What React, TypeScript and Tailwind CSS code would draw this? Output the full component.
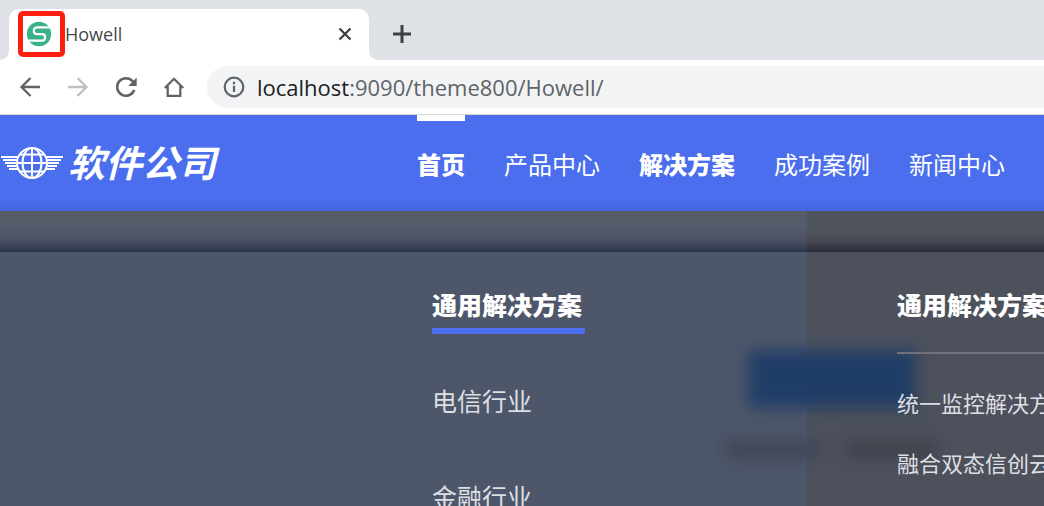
import React from 'react';
import clsx from 'clsx';

const navItems = [
  { label: '首页', current: true, bold: true },
  { label: '产品中心' },
  { label: '解决方案', bold: true },
  { label: '成功案例' },
  { label: '新闻中心' },
];

const industries = ['电信行业', '金融行业'];
const solutions = ['统一监控解决方案', '融合双态信创云解决方案'];

const Favicon = () => (
  <svg viewBox="0 0 26 26" className="h-[26px] w-[26px]" aria-hidden="true">
    <circle cx="13" cy="13" r="12.200" fill="#3cb28a" />
    <path
      d="M26 6.300H11.800C6.400 6.300 6.400 13.200 11.800 13.200H16C20.200 13.200 20.200 19.700 16 19.700H0"
      fill="none"
      stroke="white"
      strokeWidth="2.200"
    />
  </svg>
);

const BrowserTabs = () => (
  <div className="flex h-[60px] items-end bg-[#dee1e6]">
    <div className="h-[51px] w-[9px] bg-white">
      <div className="h-full rounded-br-[9px] bg-[#dee1e6]" />
    </div>
    <div className="flex h-[51px] w-[360px] items-center rounded-t-[10px] bg-white pr-[17px] pb-px pl-[9px]">
      <div className="flex h-[46px] w-[47px] shrink-0 items-center justify-center rounded-[5px] border-[5px] border-[#ff1f11] pr-[5px] pb-px">
        <Favicon />
      </div>
      <span className="flex-1 text-[18px] leading-6 text-[#45484c]">Howell</span>
      <button aria-label="Close tab" className="text-[#3c4043]">
        <svg viewBox="0 0 14 14" className="h-[14px] w-[14px]" fill="none" stroke="currentColor" strokeWidth="2.300">
          <path d="M1.500 1.500L12.500 12.500M12.500 1.500L1.500 12.500" />
        </svg>
      </button>
    </div>
    <div className="h-[51px] flex-1 bg-white">
      <div className="flex h-full items-center rounded-bl-[9px] bg-[#dee1e6] pb-px pl-[24px]">
        <button aria-label="New tab" className="text-[#3c4043]">
          <svg viewBox="0 0 18 18" className="h-[18px] w-[18px]" fill="none" stroke="currentColor" strokeWidth="3">
            <path d="M9 0V18M0 9H18" />
          </svg>
        </button>
      </div>
    </div>
  </div>
);

const BrowserToolbar = () => (
  <div className="flex h-[55px] items-center border-b border-[#d5d7da] bg-white pl-[18px] text-[#5f6368]">
    <div className="flex gap-6">
      <button aria-label="Back">
        <svg viewBox="0 0 24 24" className="h-6 w-6" fill="none" stroke="currentColor" strokeWidth="2.300">
          <path d="M22 12H4M12.500 3L3.500 12L12.500 21" />
        </svg>
      </button>
      <button aria-label="Forward" className="text-[#bdc0c3]">
        <svg viewBox="0 0 24 24" className="h-6 w-6" fill="none" stroke="currentColor" strokeWidth="2.300">
          <path d="M2 12H20M11.500 3L20.500 12L11.500 21" />
        </svg>
      </button>
      <button aria-label="Reload">
        <svg viewBox="0 0 24 24" className="h-6 w-6" fill="none" stroke="currentColor" strokeWidth="2.500">
          <path d="M20.200 15A8.800 8.800 0 1 1 18.600 6.200L20 7.600" />
          <path d="M22.700 2.500V11H14.200Z" fill="currentColor" stroke="none" />
        </svg>
      </button>
      <button aria-label="Home">
        <svg viewBox="0 0 24 24" className="h-6 w-6" fill="none" stroke="currentColor" strokeWidth="2.300">
          <path d="M2.800 13L12 3.800L21.200 13M5.700 11V20.800H18.300V11" />
        </svg>
      </button>
    </div>
    <div className="ml-[21px] flex h-[42px] flex-1 items-center rounded-l-full bg-[#f1f3f4] pl-4 text-[22px] leading-7">
      <svg viewBox="0 0 22 22" className="mr-3 h-[22px] w-[22px]" fill="none" stroke="currentColor" strokeWidth="2.200" aria-hidden="true">
        <circle cx="11" cy="11" r="9.300" />
        <path d="M11 9.800V16M11 5.800V8.200" />
      </svg>
      <span className="text-[#202124]">localhost</span>
      <span>:9090/theme800/Howell/</span>
    </div>
  </div>
);

const LogoMark = () => (
  <svg viewBox="0 0 64 34" className="h-[34px] w-[64px]" fill="none" stroke="white" aria-hidden="true">
    <g strokeWidth="2">
      <path d="M1 11H18M3 14H17M5 17H16M7 20H17M9 23H18" />
      <path d="M63 11H46M61 14H47M59 17H48M57 20H47M55 23H46" />
    </g>
    <g strokeWidth="2">
      <circle cx="32" cy="17" r="15" />
      <ellipse cx="32" cy="17" rx="9.500" ry="15" />
      <path d="M32 2V32M17 17H47M20 8.500H44M20 25.500H44" />
    </g>
  </svg>
);

const SiteHeader = () => (
  <header className="flex h-24 shrink-0 bg-[linear-gradient(#4a6eee_84px,#4465dc)] text-white">
    <a href="#" className="flex w-[417px] shrink-0 items-center gap-1">
      <LogoMark />
      <span className="text-[37px] leading-10 font-bold italic">软件公司</span>
    </a>
    <nav className="flex gap-[39px] whitespace-nowrap">
      {navItems.map((item) => (
        <a
          key={item.label}
          href="#"
          className={clsx(
            'flex items-center border-t-[6px] pb-[2px] text-[24px] leading-8',
            item.current ? 'border-white' : 'border-transparent',
            item.bold && 'font-black'
          )}
        >
          {item.label}
        </a>
      ))}
    </nav>
  </header>
);

const SolutionsMenu = () => (
  <main className="relative flex flex-1 flex-col overflow-hidden">
    <div className="flex h-[41px] shrink-0">
      <div className="w-[807px] shrink-0 bg-[linear-gradient(#545b69_40%,#4d5265_70%,#2b3549)]" />
      <div className="flex-1 bg-[linear-gradient(#50545d_50%,#454852_75%,#282c36)]" />
    </div>
    <div className="flex flex-1 text-white">
      <div className="w-[807px] shrink-0 bg-[#4e576a] pl-[432px]">
        <h2 className="w-[153px] border-b-[6px] border-[#4a6eee] pt-[35px] pb-[5px] text-[25px] leading-9 font-black whitespace-nowrap">
          通用解决方案
        </h2>
        <ul className="mt-[47px] space-y-[56px] text-[25px] leading-10 text-[#dddfe3]">
          {industries.map((name) => (
            <li key={name}>
              <a href="#">{name}</a>
            </li>
          ))}
        </ul>
      </div>
      <div className="min-w-0 flex-1 bg-[#4c515c] pl-[90px] whitespace-nowrap">
        {/* Page content showing through the frosted menu */}
        <div className="pointer-events-none absolute top-[139px] left-[748px] h-[58px] w-[168px] bg-[#1c3b68]/90 blur-[8px]" />
        <div className="pointer-events-none absolute top-[228px] left-[724px] h-[20px] w-[94px] bg-[#3f4354]/80 blur-[8px]" />
        <div className="pointer-events-none absolute top-[228px] left-[846px] h-[20px] w-[92px] bg-[#3d404a]/80 blur-[8px]" />
        <div className="relative">
          <h2 className="border-b-2 border-[#6f727c] pt-[35px] pb-[29px] text-[25px] leading-9 font-black">
            通用解决方案
          </h2>
          <ul className="mt-[33px] space-y-[28px] text-[22px] leading-8 text-[#dddfe3]">
            {solutions.map((name) => (
              <li key={name}>
                <a href="#">{name}</a>
              </li>
            ))}
          </ul>
        </div>
      </div>
    </div>
  </main>
);

export default function App() {
  return (
    <div className="flex h-screen flex-col overflow-hidden bg-white font-['Open_Sans','Noto_Sans_CJK_SC',sans-serif]">
      <div className="shrink-0">
        <BrowserTabs />
        <BrowserToolbar />
      </div>
      <SiteHeader />
      <SolutionsMenu />
    </div>
  );
}
